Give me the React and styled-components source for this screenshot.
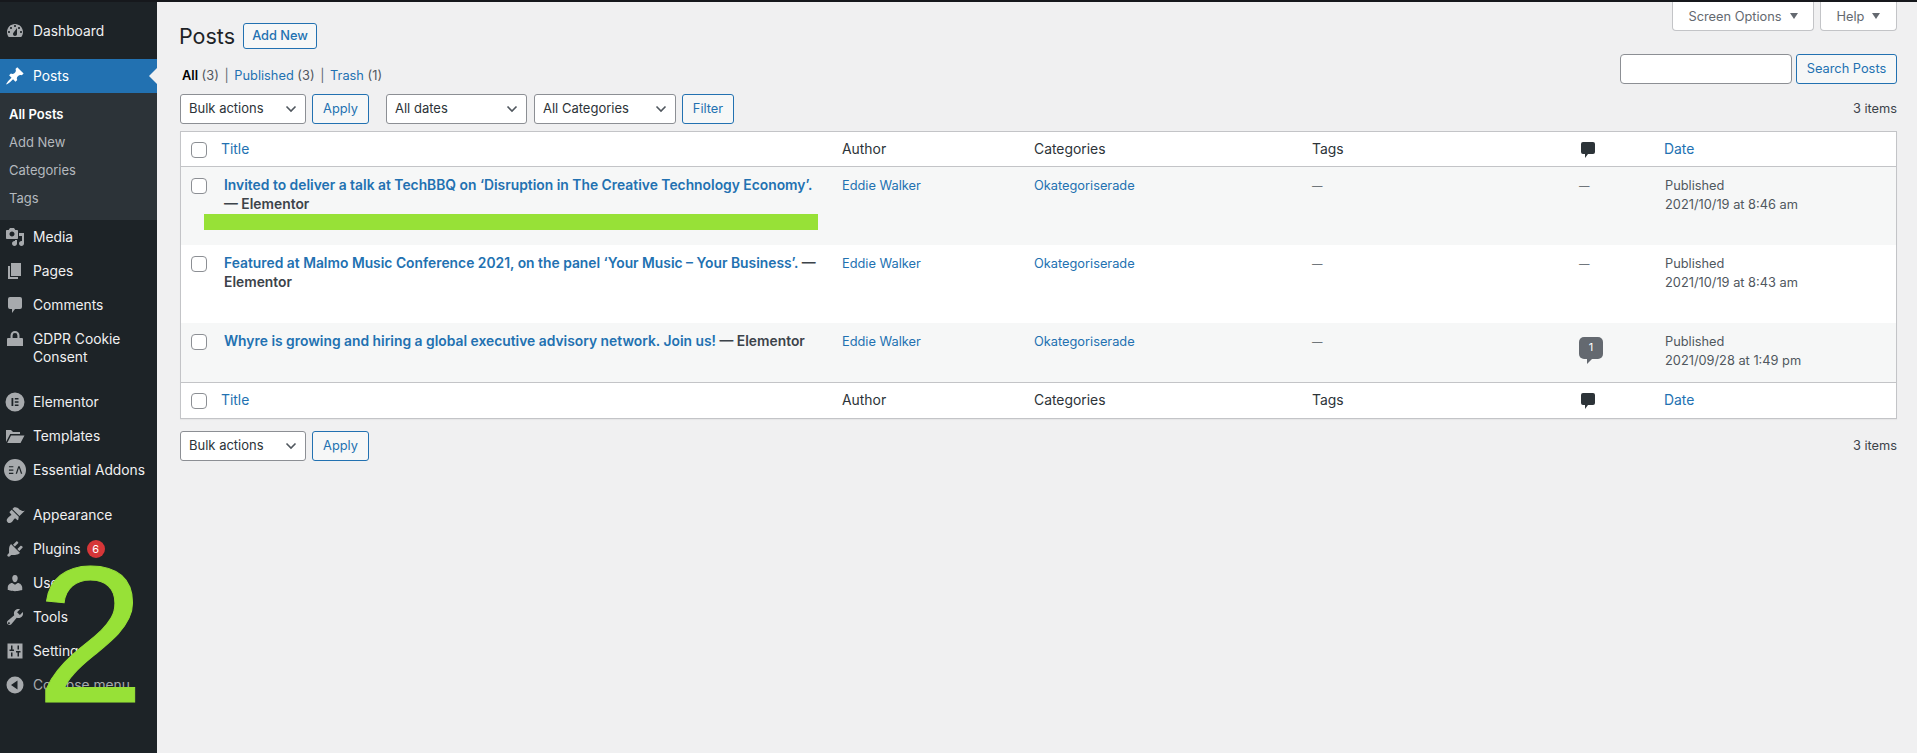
import React from "react";
import styled, { createGlobalStyle } from "styled-components";

const chevron =
  "url(\"data:image/svg+xml,%3Csvg xmlns='http://www.w3.org/2000/svg' width='12' height='8' viewBox='0 0 12 8'%3E%3Cpath d='M1.5 1.5 6 6l4.5-4.5' fill='none' stroke='%2350575e' stroke-width='1.6'/%3E%3C/svg%3E\")";

const GlobalStyle = createGlobalStyle`
  html, body {
    margin: 0;
    height: 100%;
    background: #f0f0f1;
    overflow: hidden;
  }
  body {
    font-family: Inter, "Liberation Sans", sans-serif;
    font-size: 12.8px;
    line-height: 19px;
    color: #3c434a;
  }
  * { box-sizing: border-box; }
`;

const Page = styled.div`
  height: 753px;
  border-top: 2px solid #16181c;
  display: flex;
`;

const Sidebar = styled.nav`
  position: relative;
  width: 157px;
  flex: none;
  background: #1d2327;
  padding-top: 12px;
  overflow: hidden;
`;

const MenuItem = styled.div`
  position: relative;
  display: flex;
  align-items: flex-start;
  margin-top: ${(p) => (p.$gap ? "11px" : "0")};
  padding: 8px 4px 8px 0;
  font-size: 13.8px;
  line-height: 18px;
  color: ${(p) => (p.$active ? "#fff" : p.$muted ? "#a7aaad" : "#f0f0f1")};
  background: ${(p) => (p.$active ? "#2271b1" : "transparent")};

  ${(p) =>
    p.$active &&
    `&::after {
      content: "";
      position: absolute;
      right: 0;
      top: 9px;
      border: 8px solid transparent;
      border-left: 0;
      border-right-color: #f0f0f1;
    }`}
`;

const MenuIcon = styled.span`
  width: 33px;
  flex: none;
  height: 18px;
  display: flex;
  align-items: center;
  padding-left: ${(p) => p.$left ?? 5}px;
  color: ${(p) => (p.$active ? "#fff" : "#a7aaad")};
  svg {
    display: block;
    flex: none;
  }
`;

const SubMenu = styled.div`
  background: #2c3338;
  padding: 7px 0 8px;
`;

const SubItem = styled.div`
  height: 28px;
  padding-left: 9px;
  font-size: 13px;
  line-height: 28px;
  font-weight: ${(p) => (p.$current ? 600 : 400)};
  color: ${(p) => (p.$current ? "#fff" : "#b4b9be")};
`;

const Badge = styled.span`
  display: inline-block;
  width: 18px;
  height: 18px;
  margin-left: 6px;
  border-radius: 50%;
  background: #d63638;
  color: #fff;
  font-size: 11px;
  line-height: 18px;
  text-align: center;
  vertical-align: top;
`;

const BigNumber = styled.div`
  position: absolute;
  left: 36px;
  top: 535px;
  font-family: "Liberation Sans", sans-serif;
  font-size: 195px;
  line-height: 195px;
  color: #97e137;
  -webkit-text-stroke: 1px #97e137;
  pointer-events: none;
`;

const Main = styled.main`
  flex: 1;
  min-width: 0;
  padding: 0 20px 0 23px;
`;

const TopBlock = styled.div`
  display: flex;
  justify-content: space-between;
  align-items: flex-start;
`;

const TitleColumn = styled.div`
  padding-top: 21px;
`;

const Heading = styled.div`
  display: flex;
  align-items: center;
  gap: 8px;
  height: 26px;
`;

const PageTitle = styled.h1`
  margin: 0 0 0 -1px;
  font-size: 21.5px;
  font-weight: 400;
  line-height: 26px;
  color: #1d2327;
`;

const OutlineButton = styled.button`
  height: ${(p) => p.$h ?? 30}px;
  width: ${(p) => p.$w}px;
  flex: none;
  padding: 0 0 1px;
  font-family: inherit;
  font-size: 12.8px;
  font-weight: ${(p) => p.$weight ?? 400};
  color: #2271b1;
  background: #f6f7f7;
  border: 1px solid #2271b1;
  border-radius: 3px;
`;

const Views = styled.div`
  margin: 17px 0 0 2px;
  color: #50575e;
  b {
    font-weight: 600;
    color: #000;
  }
  a {
    color: #2271b1;
  }
`;

const Separator = styled.span`
  margin: 0 2px;
  color: #646970;
`;

const RightColumn = styled.div`
  display: flex;
  flex-direction: column;
  align-items: flex-end;
`;

const ScreenMeta = styled.div`
  display: flex;
  gap: 6px;
`;

const MetaTab = styled.div`
  width: ${(p) => p.$w}px;
  height: 29px;
  display: flex;
  align-items: center;
  justify-content: center;
  gap: 8px;
  background: #fff;
  border: 1px solid #c3c4c7;
  border-top: 0;
  border-radius: 0 0 4px 4px;
  color: #646970;
  font-size: 12.8px;
  &::after {
    content: "";
    border: 4.5px solid transparent;
    border-top: 6px solid #646970;
    border-bottom: 0;
  }
`;

const SearchBox = styled.div`
  display: flex;
  gap: 4px;
  margin-top: 23px;
`;

const SearchInput = styled.input`
  width: 172px;
  height: 30px;
  background: #fff;
  border: 1px solid #8c8f94;
  border-radius: 4px;
`;

const TableNav = styled.div`
  display: flex;
  align-items: center;
  height: 30px;
  margin-top: ${(p) => p.$top}px;
`;

const Select = styled.select`
  appearance: none;
  width: ${(p) => p.$w}px;
  height: 30px;
  flex: none;
  margin-left: ${(p) => p.$left ?? 0}px;
  margin-right: 6px;
  padding: 0 20px 2px 8px;
  font-family: inherit;
  font-size: 13px;
  color: #2c3338;
  background: #fff ${chevron} no-repeat right 8px center;
  border: 1px solid #8c8f94;
  border-radius: 3px;
`;

const Count = styled.div`
  margin-left: auto;
  padding-bottom: 2px;
  color: #3c434a;
`;

const Table = styled.table`
  width: 1717px;
  margin-top: 7px;
  table-layout: fixed;
  border-collapse: separate;
  border-spacing: 0;
  background: #fff;
  border: 1px solid #c3c4c7;
  box-shadow: 0 1px 1px rgba(0, 0, 0, 0.04);
`;

const HeadCell = styled.th`
  width: ${(p) => p.$w}px;
  height: ${(p) => p.$h ?? 35}px;
  padding: ${(p) => (p.$bottom ? "1px" : "0")} ${(p) => p.$pad ?? 10}px 0;
  font-size: 13.9px;
  font-weight: 400;
  text-align: left;
  color: #2c3338;
  ${(p) => p.$bottom && "border-bottom: 1px solid #c3c4c7;"}
  ${(p) => p.$top && "border-top: 1px solid #c3c4c7;"}
  a {
    color: #2271b1;
  }
  svg {
    display: block;
  }
`;

const CommentHead = styled.div`
  margin: 1px 0 0 -1px;
`;

const Row = styled.tr`
  background: ${(p) => (p.$striped ? "#f6f7f7" : "#fff")};
`;

const Cell = styled.td`
  position: relative;
  padding: 9px 10px 12px ${(p) => p.$left ?? 10}px;
  vertical-align: top;
  color: #50575e;
  a {
    color: #2271b1;
  }
`;

const Dash = styled.span`
  font-size: 10.5px;
`;

const CheckBox = styled.input.attrs({ type: "checkbox" })`
  appearance: none;
  display: block;
  width: 16px;
  height: 16px;
  margin: 0 0 0 10px;
  background: #fff;
  border: 1px solid #8c8f94;
  border-radius: 4px;
`;

const CheckCell = styled.td`
  padding: 11px 0 0;
  vertical-align: top;
`;

const PostTitle = styled.div`
  font-size: 13.85px;
  font-weight: 600;
  a {
    color: #2271b1;
  }
  span {
    color: #3c434a;
  }
`;

const RowSpacer = styled.div`
  height: 19px;
`;

const Highlight = styled.div`
  position: absolute;
  left: -10px;
  top: 47px;
  width: 614px;
  height: 16px;
  background: #97e137;
`;

const CommentBubble = styled.div`
  position: relative;
  width: 24px;
  height: 22px;
  margin-top: 5px;
  background: #646970;
  border-radius: 5px;
  color: #fff;
  font-size: 11px;
  line-height: 20px;
  text-align: center;
  &::after {
    content: "";
    position: absolute;
    left: 8px;
    bottom: -5px;
    border-top: 5px solid #646970;
    border-right: 5px solid transparent;
  }
`;

const Icon = ({ d, size = 20 }) => (
  <svg width={size} height={size} viewBox="0 0 20 20" fill="currentColor">
    <path fillRule="evenodd" d={d} />
  </svg>
);

const paths = {
  dashboard:
    "M3.76 16h12.48c1.1-1.37 1.76-3.11 1.76-5 0-4.42-3.58-8-8-8s-8 3.58-8 8c0 1.89.66 3.63 1.76 5zM10 4c.55 0 1 .45 1 1s-.45 1-1 1-1-.45-1-1 .45-1 1-1zM6 6c.55 0 1 .45 1 1s-.45 1-1 1-1-.45-1-1 .45-1 1-1zm8 0c.55 0 1 .45 1 1s-.45 1-1 1-1-.45-1-1 .45-1 1-1zm-5.37 5.55L12 7v6c0 1.1-.9 2-2 2s-2-.9-2-2c0-.57.24-1.08.63-1.45zM4 10c.55 0 1 .45 1 1s-.45 1-1 1-1-.45-1-1 .45-1 1-1zm12 0c.55 0 1 .45 1 1s-.45 1-1 1-1-.45-1-1 .45-1 1-1z",
  pin: "M10.44 3.02l1.82-1.82 6.36 6.35-1.83 1.82c-1.05-.68-2.48-.57-3.41.36l-.75.75c-.92.93-1.04 2.35-.35 3.41l-1.83 1.82-2.41-2.41-2.8 2.79c-.42.42-3.38 2.71-3.8 2.29s1.86-3.39 2.28-3.81l2.79-2.79L4.1 9.36l1.83-1.82c1.05.69 2.48.57 3.4-.36l.75-.75c.93-.92 1.05-2.35.36-3.41z",
  media:
    "M13 11V4c0-.55-.45-1-1-1h-1.67L9 1H5L3.67 3H2c-.55 0-1 .45-1 1v7c0 .55.45 1 1 1h10c.55 0 1-.45 1-1zM7 4.5c1.38 0 2.5 1.12 2.5 2.5S8.38 9.5 7 9.5 4.5 8.38 4.5 7 5.62 4.5 7 4.5zM14 6h5v10.5c0 1.38-1.12 2.5-2.5 2.5S14 17.88 14 16.5s1.12-2.5 2.5-2.5c.17 0 .34.02.5.05V9h-3V6zm-4 8.05V13h2v3.5c0 1.38-1.12 2.5-2.5 2.5S7 17.88 7 16.5 8.12 14 9.5 14c.17 0 .34.02.5.05z",
  pages: "M6 15V2h10v13H6zm-1 1h8v2H3V5h2v11z",
  comment: "M5 2h10q2 0 2 2v8q0 2-2 2h-5l-3 4v-4H5q-2 0-2-2V4q0-2 2-2z",
  lock: "M5.5 9V6.5a4.5 4.5 0 0 1 9 0V9H17a1 1 0 0 1 1 1v7H2v-7a1 1 0 0 1 1-1zM7.6 9h4.8V6.5a2.4 2.4 0 0 0-4.8 0z",
  elementor:
    "M10 .5a9.5 9.5 0 1 0 0 19 9.5 9.5 0 0 0 0-19zM6.5 6h1.8v8H6.500zM9.800 6h3.700v1.600H9.800zM9.800 9.200h3.700v1.600H9.800zM9.800 12.400h3.700V14H9.800z",
  folder: "M1 16V4h5l2 2h7v2H5.2zM2.2 17 6 9.5h13.5L15.5 17z",
  addons:
    "M10 0a10 10 0 1 0 0 20 10 10 0 0 0 0-20zM4.500 6.500h4v1.100h-4zM4.500 9.500h4v1.100h-4zM4.500 12.500h4v1.100h-4zM13 6.500h1.200l2.400 7h-1.200L13.600 8l-1.800 5.500h-1.200z",
  brush:
    "M14.48 11.06L7.41 3.99l1.5-1.5c.5-.56 2.3-.47 3.51.32 1.21.8 1.43 1.28 2.91 2.1 1.18.64 2.45 1.26 4.45.85zm-.71.71L6.7 4.7 4.93 6.47c-.39.39-.39 1.02 0 1.41l1.06 1.06c.39.39.39 1.03 0 1.42-.6.6-1.43 1.11-2.21 1.69-.35.26-.7.53-1.01.84-1.43 1.43-1.4 3.1-.19 4.3 1.2 1.2 2.87 1.24 4.3-.19.31-.31.58-.66.84-1.01.58-.78 1.09-1.61 1.69-2.21.39-.39 1.03-.39 1.42 0l1.06 1.06c.39.39 1.02.39 1.41 0z",
  plug: "M13.11 4.36L9.87 7.6 8 5.73l3.24-3.24c.35-.34 1.05-.2 1.56.32.52.51.66 1.21.31 1.55zm-8 1.77l.91-1.12 9.01 9.01-1.19.84c-.71.71-2.63 1.16-3.82 1.16H6.14L4.9 17.26c-.59.59-1.54.59-2.12 0-.59-.58-.59-1.53 0-2.12l1.24-1.24v-3.88c0-1.13.4-3.19 1.09-3.89zm7.26 3.97l3.24-3.24c.34-.35 1.04-.21 1.55.31.52.51.66 1.21.31 1.56l-3.24 3.24z",
  user: "M10 9.25c-2.27 0-2.73-3.44-2.73-3.44C7 4.02 7.82 2 9.97 2c2.16 0 2.98 2.02 2.71 3.81 0 0-.41 3.44-2.68 3.44zm0 2.57L12.72 10c2.39 0 4.52 2.33 4.52 4.53v2.49s-3.65 1.13-7.24 1.13c-3.65 0-7.24-1.13-7.24-1.13v-2.49c0-2.25 1.94-4.48 4.47-4.48z",
  wrench:
    "M16.68 9.77c-1.34 1.34-3.3 1.67-4.95.99l-5.41 6.52c-.99.99-2.59.99-3.57 0-.99-.98-.99-2.58 0-3.57l6.52-5.42c-.68-1.65-.35-3.61.99-4.95 1.28-1.28 3.12-1.62 4.72-1.06l-2.89 2.89 2.82 2.82 2.89-2.89c.56 1.6.22 3.44-1.06 4.72zm-12.05 5.66c-.39-.39-1.03-.39-1.42 0s-.39 1.03 0 1.42c.39.39 1.03.39 1.42 0s.39-1.03 0-1.42z",
  sliders:
    "M2.5 2.5h15v15h-15zM6 4.500v4H4.500V10H9V8.500H7.500v-4zM6 11.500v4h1.500v-4zM12.500 4.500v4H14v-4zM11 10v1.500h1.500v4H14v-4h1.500V10z",
  collapse: "M10 1.500a8.500 8.500 0 1 0 0 17 8.500 8.500 0 0 0 0-17zM12.500 5.500v9L6 10z",
};

const menuMiddle = [
  { label: "Media", icon: paths.media },
  { label: "Pages", icon: paths.pages },
  { label: "Comments", icon: paths.comment },
  { label: <>GDPR Cookie<br />Consent</>, icon: paths.lock },
  { label: "Elementor", icon: paths.elementor, gap: true },
  { label: "Templates", icon: paths.folder },
  { label: "Essential Addons", icon: paths.addons, size: 22, left: 4 },
  { label: "Appearance", icon: paths.brush, gap: true },
  { label: <>Plugins<Badge>6</Badge></>, icon: paths.plug },
  { label: "Users", icon: paths.user },
  { label: "Tools", icon: paths.wrench },
  { label: "Settings", icon: paths.sliders },
  { label: "Collapse menu", icon: paths.collapse, muted: true },
];

const posts = [
  {
    id: 1,
    title: "Invited to deliver a talk at TechBBQ on ‘Disruption in The Creative Technology Economy’.",
    date: "2021/10/19 at 8:46 am",
    striped: true,
    highlight: true,
  },
  {
    id: 2,
    title: "Featured at Malmo Music Conference 2021, on the panel ‘Your Music – Your Business’.",
    date: "2021/10/19 at 8:43 am",
  },
  {
    id: 3,
    title: "Whyre is growing and hiring a global executive advisory network. Join us!",
    date: "2021/09/28 at 1:49 pm",
    striped: true,
    comments: 1,
  },
];

const HeadRow = ({ bottom, top, h }) => (
  <tr>
    <HeadCell $w={33} $pad={0} $h={h} $bottom={bottom} $top={top}>
      <CheckBox />
    </HeadCell>
    <HeadCell $w={618} $pad={7} $h={h} $bottom={bottom} $top={top}><a>Title</a></HeadCell>
    <HeadCell $w={192} $h={h} $bottom={bottom} $top={top}>Author</HeadCell>
    <HeadCell $w={278} $h={h} $bottom={bottom} $top={top}>Categories</HeadCell>
    <HeadCell $w={267} $h={h} $bottom={bottom} $top={top}>Tags</HeadCell>
    <HeadCell $w={88} $h={h} $bottom={bottom} $top={top}>
      <CommentHead><Icon d={paths.comment} /></CommentHead>
    </HeadCell>
    <HeadCell $w={239} $pad={7} $h={h} $bottom={bottom} $top={top}><a>Date</a></HeadCell>
  </tr>
);

const BulkActions = () => (
  <>
    <Select $w={126}><option>Bulk actions</option></Select>
    <OutlineButton $w={57}>Apply</OutlineButton>
  </>
);

const App = () => {
  return (
    <>
      <GlobalStyle />
      <Page>
        <Sidebar>
          <MenuItem>
            <MenuIcon><Icon d={paths.dashboard} /></MenuIcon>
            Dashboard
          </MenuItem>
          <MenuItem $gap $active>
            <MenuIcon $active><Icon d={paths.pin} /></MenuIcon>
            Posts
          </MenuItem>
          <SubMenu>
            <SubItem $current>All Posts</SubItem>
            <SubItem>Add New</SubItem>
            <SubItem>Categories</SubItem>
            <SubItem>Tags</SubItem>
          </SubMenu>
          {menuMiddle.map((item, i) => (
            <MenuItem key={i} $gap={item.gap} $muted={item.muted}>
              <MenuIcon $left={item.left}><Icon d={item.icon} size={item.size} /></MenuIcon>
              <span>{item.label}</span>
            </MenuItem>
          ))}
          <BigNumber>2</BigNumber>
        </Sidebar>

        <Main>
          <TopBlock>
            <TitleColumn>
              <Heading>
                <PageTitle>Posts</PageTitle>
                <OutlineButton $w={74} $h={26} $weight={500}>Add New</OutlineButton>
              </Heading>
              <Views>
                <b>All</b> (3) <Separator>|</Separator> <a>Published</a> (3) <Separator>|</Separator> <a>Trash</a> (1)
              </Views>
            </TitleColumn>
            <RightColumn>
              <ScreenMeta>
                <MetaTab $w={142}>Screen Options</MetaTab>
                <MetaTab $w={77}>Help</MetaTab>
              </ScreenMeta>
              <SearchBox>
                <SearchInput />
                <OutlineButton $w={101}>Search Posts</OutlineButton>
              </SearchBox>
            </RightColumn>
          </TopBlock>

          <TableNav $top={9}>
            <BulkActions />
            <Select $w={141} $left={17}>
              <option>All dates</option>
            </Select>
            <Select $w={142} $left={1}>
              <option>All Categories</option>
            </Select>
            <OutlineButton $w={52}>Filter</OutlineButton>
            <Count>3 items</Count>
          </TableNav>

          <Table>
            <thead>
              <HeadRow bottom />
            </thead>
            <tbody>
              {posts.map((post) => (
                <Row key={post.id} $striped={post.striped}>
                  <CheckCell><CheckBox /></CheckCell>
                  <Cell>
                    <PostTitle>
                      <a>{post.title}</a> <span>— Elementor</span>
                    </PostTitle>
                    <RowSpacer />
                    {post.highlight && <Highlight />}
                  </Cell>
                  <Cell><a>Eddie Walker</a></Cell>
                  <Cell><a>Okategoriserade</a></Cell>
                  <Cell><Dash>—</Dash></Cell>
                  <Cell>
                    {post.comments ? <CommentBubble>{post.comments}</CommentBubble> : <Dash>—</Dash>}
                  </Cell>
                  <Cell $left={8}>Published<br />{post.date}</Cell>
                </Row>
              ))}
            </tbody>
            <tfoot>
              <HeadRow top h={36} />
            </tfoot>
          </Table>

          <TableNav $top={12}>
            <BulkActions />
            <Count>3 items</Count>
          </TableNav>
        </Main>
      </Page>
    </>
  );
};

export default App;
